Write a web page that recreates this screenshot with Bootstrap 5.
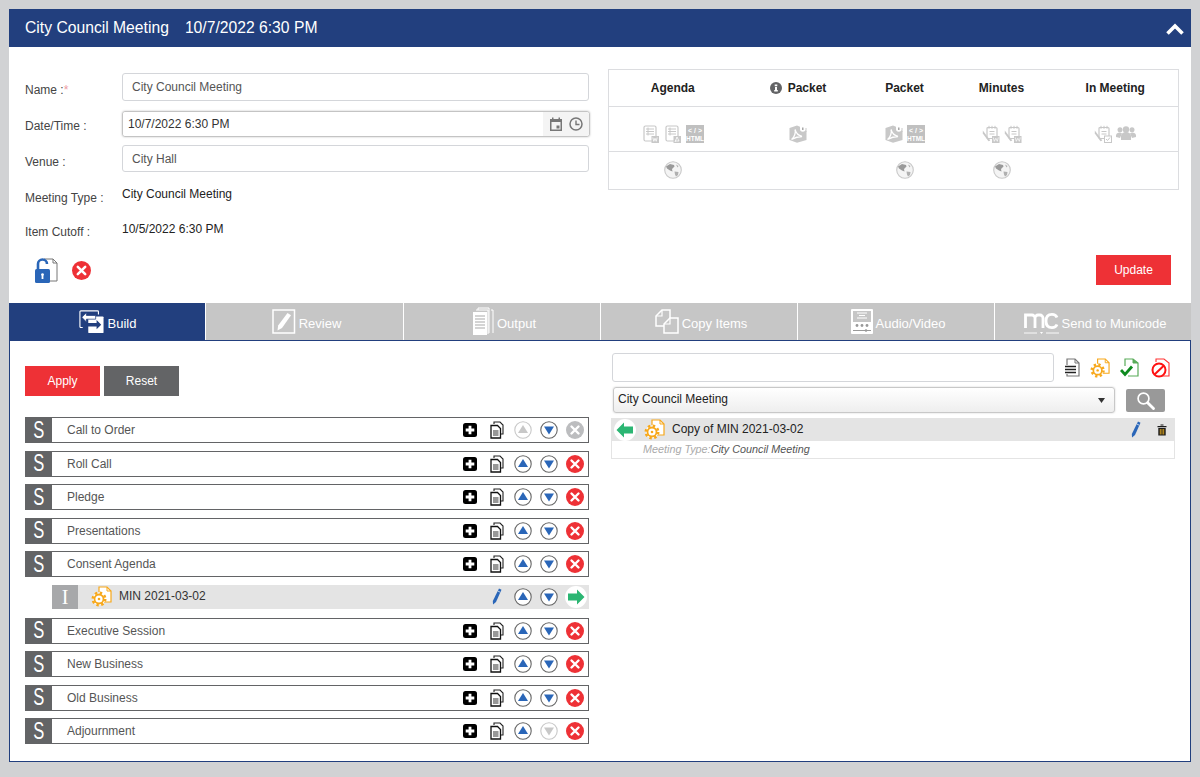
<!DOCTYPE html>
<html lang="en">
<head>
<meta charset="utf-8">
<title>City Council Meeting</title>
<link href="https://cdn.jsdelivr.net/npm/bootstrap@5.3.0/dist/css/bootstrap.min.css" rel="stylesheet">
<style>
html,body{height:100%;}
body{background:#d1d2d4;font-family:"Liberation Sans",Arial,sans-serif;font-size:12px;color:#444;padding:9px 9px 15px;overflow:hidden;}
svg{display:block;flex:none;}
.shell{width:1182px;}
.headbar{height:38px;background:#223f7e;color:#fff;font-size:15.7px;padding:0 16px;}
.headbar .when{margin-left:16px;}
.chev{margin-right:-9px;margin-top:1px;}
.toppane{height:256px;background:#fff;padding:26px 12px 0 16px;gap:19px;}
.leftform{width:564px;}
.fld{margin-bottom:8px;}
.fld-label{width:97px;flex:none;color:#444;}
.ctl.form-control{font-size:12px;color:#555;border:1px solid #d4d6da;border-radius:3px;padding:0 9px;box-shadow:none;}
.h28{height:28px;margin-bottom:10px;}
.h27{height:27px;}
.dategrp{height:26px;border:1px solid #c4c4c4;border-radius:3px;box-shadow:0 0 2px #bbb;flex-wrap:nowrap;width:468px;flex:none;}
.dategrp .form-control{border:0;border-radius:3px 0 0 3px;font-size:12px;color:#333;padding:0 5px;height:24px;min-height:0;}
.dategrp .input-group-text{background:#f4f4f4;border:0;border-left:1px solid #d4d4d4;border-radius:0 3px 3px 0;padding:0 6px;gap:6px;}
.static-val{color:#222;}
.stat-row{height:35px;}
.stat-first{margin-top:-3px;}
.labnudge{padding-top:6px;}
.labnudge-s{padding-top:4px;}
.valnudge{padding-bottom:2px;}
.actions-top{gap:14px;padding-left:9px;margin-top:9px;}
.btn.rbtn{width:75px;height:30px;border-radius:0;border:0;font-size:12px;color:#fff;padding:0;display:flex;align-items:center;justify-content:center;}
.bg-r{background:#ee3136;}
.bg-r:hover{background:#ee3136;}
.bg-d{background:#636466;}
.bg-d:hover{background:#636466;}
.rightside{width:571px;height:230px;}
.outtable{width:570px;height:120px;table-layout:fixed;border:1px solid #dcdde0;margin:-4px 0 0;border-collapse:collapse;}
.outtable td,.outtable th{border:0;border-top:1px solid #dcdde0;padding:0;text-align:center;vertical-align:middle;font-size:12px;color:#222;font-weight:700;}
.outtable tr:first-child th{border-top:0;height:37px;}
.outtable .r2{height:45px;}
.outtable .r2 td{padding-top:9px;}
.outtable .r3{height:38px;}
.outtable .r3 td{padding-bottom:2px;}
.c1{width:128px;}.c2{width:122px;}.c3{width:92px;}.c4{width:102px;}.c5{width:126px;}
.pkt{gap:6px;padding:0 0 0 1px;}
.updrow{margin-top:65px;padding-right:8px;}
.tabbar{height:37px;background:#fff;}
.tabitem{flex:none;width:197px;background:#c6c6c6;color:#fff;font-size:13px;border-right:1px solid #fff;gap:3px;height:37px;padding-left:4px;}
.tabitem:nth-child(2){width:198px;}
.tabitem:last-child{border-right:0;width:196px;}
.tabitem span{margin-top:5px;}
.tabitem.on{background:#223f7e;padding-left:0;}
.workpane{height:422px;background:#fff;border:1px solid #223f7e;padding:25px 15px 0;}
.buildcol{width:564px;flex:none;}
.btnrow{gap:4px;margin-bottom:21px;}
.sect{height:26px;margin-bottom:7.5px;border:1px solid #636466;background:#fff;color:#555;}
.sblock{width:27px;align-self:stretch;background:#636466;color:#fff;font-size:23px;margin:-1px 0 -1px -1px;flex:none;}
.sglyph{display:inline-block;transform:scaleX(.72);line-height:1;}
.sname{padding-left:15px;}
.tc{height:24px;flex:none;}
.w25{width:25px;}.w26{width:26px;}.w27{width:27px;}
.itemrow{height:24px;margin-left:27px;margin-bottom:9px;background:#e4e4e4;color:#333;}
.iblock{width:26px;align-self:stretch;background:#a7a8aa;color:#fff;font-family:"Liberation Serif",serif;font-size:20px;flex:none;}
.itemgear{margin-left:13px;}
.itemname{margin-left:7px;margin-top:-2px;}
.searchcol{width:564px;margin-left:22px;margin-top:-13px;}
.searchin.form-control{height:29px;width:442px;border:1px solid #d4d6da;border-radius:3px;margin-left:1px;padding:0 6px;font-size:12px;}
.srchicons{margin-left:11px;gap:10px;}
.pick{width:502px;height:26px;margin:5px 0 0 2px;font-size:12px;color:#222;padding:0 20px 2px 4px;border:1px solid #c8c8c8;border-radius:3px;box-shadow:0 0 2px #ccc;background:url("data:image/svg+xml,%3Csvg xmlns='http://www.w3.org/2000/svg' width='8' height='5'%3E%3Cpath d='M0 0h7L3.500 5z' fill='%23333'/%3E%3C/svg%3E") no-repeat right 8px center,linear-gradient(#fff,#eee);}
.lensbtn{width:39px;height:23px;background:#999;border:0;border-radius:2px;padding:0;margin:7px 0 0 11px;}
.lensbtn:hover{background:#999;}
.hit{margin-top:5px;width:564px;}
.hithead{height:23px;background:#e4e4e4;color:#222;padding-left:3px;}
.hitname{margin-left:7px;margin-top:-2px;}
.hitmeta{height:18px;border:1px solid #e4e4e4;border-top:0;font-size:10.8px;font-style:italic;color:#555;padding-left:31px;}
.hitmeta span{color:#aaa;}
</style>
</head>
<body>
<svg width="0" height="0" class="position-absolute">
<defs>
<symbol id="plus" viewBox="0 0 14 14"><rect width="14" height="14" rx="2.500" fill="#000"/><path d="M5.600 2.700h2.800v2.900h2.900v2.800H8.400v2.900H5.600V8.400H2.700V5.600h2.900z" fill="#fff"/></symbol>
<symbol id="copydoc" viewBox="0 0 14 18"><path d="M4 3V1h6l3 3v9h-3" fill="#fff" stroke="#222" stroke-width="1.100"/><path d="M1 4.500h6.500l3 3V17H1z" fill="#fff" stroke="#111" stroke-width="1.300"/><path d="M3 10h5.500M3 12h5.500M3 14h5.500" stroke="#333" stroke-width="1.100"/></symbol>
<symbol id="up" viewBox="0 0 18 18"><circle cx="9" cy="9" r="8.200" fill="#fff" stroke="#666" stroke-width="1.100"/><path d="M9 4l5 8H4z" fill="#2a66b8"/></symbol>
<symbol id="down" viewBox="0 0 18 18"><circle cx="9" cy="9" r="8.200" fill="#fff" stroke="#666" stroke-width="1.100"/><path d="M9 13.500l-5-8h10z" fill="#2a66b8"/></symbol>
<symbol id="upoff" viewBox="0 0 18 18"><circle cx="9" cy="9" r="8.200" fill="#fff" stroke="#c8c8c8" stroke-width="1.100"/><path d="M9 4l5 8H4z" fill="#c8c8c8"/></symbol>
<symbol id="downoff" viewBox="0 0 18 18"><circle cx="9" cy="9" r="8.200" fill="#fff" stroke="#c8c8c8" stroke-width="1.100"/><path d="M9 13.500l-5-8h10z" fill="#c8c8c8"/></symbol>
<symbol id="xred" viewBox="0 0 18 18"><circle cx="9" cy="9" r="9" fill="#ee3136"/><path d="M5.500 5.500l7 7M12.500 5.500l-7 7" stroke="#fff" stroke-width="2.400" stroke-linecap="round"/></symbol>
<symbol id="xoff" viewBox="0 0 18 18"><circle cx="9" cy="9" r="9" fill="#bcbdbf"/><path d="M5.500 5.500l7 7M12.500 5.500l-7 7" stroke="#fff" stroke-width="2.400" stroke-linecap="round"/></symbol>
<symbol id="gor" viewBox="0 0 22 22"><circle cx="11" cy="11" r="11" fill="#fff"/><path d="M3 7.500h9V3.500l7.500 7.500-7.500 7.500v-4H3z" fill="#2bb673"/></symbol>
<symbol id="gol" viewBox="0 0 22 22"><circle cx="11" cy="11" r="11" fill="#fff"/><path d="M19 7.500h-9V3.500L2.500 11l7.500 7.500v-4h9z" fill="#2bb673"/></symbol>
<symbol id="pencil" viewBox="0 0 10 17"><path d="M7 .5l2.500 1.200L4 14l-3 2.500L.8 13z" fill="#2a66b8"/><path d="M5.800 3l2.400 1.200" stroke="#fff" stroke-width=".7"/></symbol>
<symbol id="geardoc" viewBox="0 0 21 21"><path d="M8 6V1h8l4 4v11h-7" fill="#fff" stroke="#f7a81b" stroke-width="1.200"/><path d="M16 1v4h4" fill="none" stroke="#f7a81b"/><circle cx="8" cy="13" r="6.200" fill="#fff" stroke="#f7a81b" stroke-width="2.600" stroke-dasharray="2.400 2.470"/><circle cx="8" cy="13" r="4.500" fill="#fff" stroke="#f7a81b" stroke-width="1.800"/><circle cx="8" cy="13" r="1.300" fill="#f7a81b"/></symbol>
<symbol id="trash" viewBox="0 0 10 12"><path d="M3.500 1.500V.5h3v1M.5 2h9v1.300h-9zM1.300 4h7.400v7.500H1.300z" fill="#1c1c1c"/><path d="M3.300 5v5.500M5 5v5.500M6.700 5v5.500" stroke="#d09c1e" stroke-width="1"/></symbol>
<symbol id="linedoc" viewBox="0 0 15 19"><path d="M2 7V1h8l4 4v13H2v-2" fill="#fff" stroke="#777" stroke-width="1.200"/><path d="M10 1v4h4" fill="none" stroke="#777"/><path d="M0 8.500h11M0 11.500h11M0 14.500h11" stroke="#222" stroke-width="1.700"/></symbol>
<symbol id="checkdoc" viewBox="0 0 20 19"><path d="M5 8V1h8l5 4v13H8" fill="#fff" stroke="#59ab59" stroke-width="1.200"/><path d="M13 1v4h5" fill="#59ab59" stroke="#59ab59"/><path d="M1 12l4 4.500 7-8" fill="none" stroke="#0d8a1e" stroke-width="2.800"/></symbol>
<symbol id="nodoc" viewBox="0 0 20 20"><path d="M6 4V1h8l5 4v13h-7" fill="#fff" stroke="#f33" stroke-width="1.100"/><circle cx="9" cy="12" r="6.500" fill="#fff" stroke="#f11" stroke-width="2"/><path d="M4.500 16.500L14 7.500" stroke="#f11" stroke-width="2"/></symbol>
<symbol id="lens" viewBox="0 0 24 24"><circle cx="9" cy="9" r="6.500" fill="none" stroke="#fff" stroke-width="2"/><path d="M14 14l7 7" stroke="#fff" stroke-width="3.400" stroke-linecap="round"/></symbol>
<symbol id="lockdoc" viewBox="0 0 24 28"><path d="M10 3h9l4 4v18h-9" fill="#fff" stroke="#777" stroke-width="1"/><path d="M19 3v4h4" fill="none" stroke="#777"/><path d="M4 13V8a4.500 4.500 0 0 1 9 0" fill="none" stroke="#2a66b8" stroke-width="2.600"/><rect x="1" y="13" width="15" height="14" rx="1.500" fill="#2a66b8"/><path d="M8.500 18v5" stroke="#fff" stroke-width="1.800"/><circle cx="8.500" cy="18.500" r="1.300" fill="#fff"/></symbol>
<symbol id="cal" viewBox="0 0 14 14"><path d="M1 2h2V.5h1.500V2h5V.5H11V2h2v12H1z" fill="#777"/><rect x="2.500" y="5" width="9" height="7.500" fill="#f4f4f4"/><rect x="7.500" y="8.500" width="3" height="3" fill="#777"/></symbol>
<symbol id="clock" viewBox="0 0 14 14"><circle cx="7" cy="7" r="6" fill="none" stroke="#777" stroke-width="1.500"/><path d="M7 3.500V7.500h3.500" fill="none" stroke="#777" stroke-width="1.400"/></symbol>
<symbol id="chevron" viewBox="0 0 18 12"><path d="M1.500 10.500L9 3l7.500 7.500" fill="none" stroke="#fff" stroke-width="3.600"/></symbol>
<symbol id="infod" viewBox="0 0 12 12"><circle cx="6" cy="6" r="6" fill="#636466"/><path d="M4.700 2.500h2.600v1.800H4.700zM5 5h2v3h.8v1.500H4.200V8H5z" fill="#fff"/></symbol>
<symbol id="listdoc" viewBox="0 0 16 18"><rect x="1" y="1" width="12" height="15" rx="1.500" fill="#fff" stroke="#c8c8c8" stroke-width="1.200"/><path d="M3 4h8M3 6.500h8M3 9h8M5 2.500v8" stroke="#c8c8c8"/><rect x="8.500" y="11" width="7.500" height="7" fill="#c8c8c8"/><path d="M9.800 12.500l1 3.800 1.200-3 1.200 3 1-3.800" fill="none" stroke="#fff" stroke-width=".8"/></symbol>
<symbol id="listpdf" viewBox="0 0 16 18"><rect x="1" y="1" width="12" height="15" rx="1.500" fill="#fff" stroke="#c8c8c8" stroke-width="1.200"/><path d="M3 4h8M3 6.500h8M3 9h8M5 2.500v8" stroke="#c8c8c8"/><rect x="8.500" y="11" width="7.500" height="7" fill="#c8c8c8"/><path d="M10 17l2-5 2 4-4 0" fill="none" stroke="#fff" stroke-width=".8"/></symbol>
<symbol id="htmlbox" viewBox="0 0 18 18"><rect width="18" height="18" fill="#c0c0c0"/><text x="9" y="8" font-family="Liberation Sans" font-size="7" fill="#fff" text-anchor="middle">&lt; / &gt;</text><text x="9" y="16" font-family="Liberation Sans" font-size="6.500" font-weight="700" fill="#fff" text-anchor="middle">HTML</text></symbol>
<symbol id="acro" viewBox="0 0 18 18"><path d="M.5 3L8 .5l3 1.200V6h6.500v9L8 17.800.5 15z" fill="#c8c8c8"/><path d="M11 3h6.500v4H11z" fill="#c8c8c8"/><circle cx="13.800" cy="4" r="2.800" fill="#fff"/><path d="M13.800 2.500v2.600" stroke="#999" stroke-width="1.300"/><path d="M2.500 14.500c3-2 4.500-7.500 3.500-10 1 3.500 3.500 6 7 7-3.500 0-7 1-10.500 3z" fill="none" stroke="#fff" stroke-width="1.300"/></symbol>
<symbol id="mindoc" viewBox="0 0 18 18"><rect x="5" y="2.500" width="10" height="11" rx="1" fill="#fff" stroke="#c8c8c8" stroke-width="1.200"/><path d="M7 .8v3M10 .8v3M13 .8v3M7.500 6.500h5M7.500 9h5" stroke="#c8c8c8"/><path d="M.8 5.500l7.500 10-1.800.8L.8 8.500z" fill="#c8c8c8"/><rect x="10" y="11" width="7.500" height="7" fill="#c8c8c8"/><path d="M11.300 12.500l1 3.800 1.500-3 1.500 3 1-3.800" fill="none" stroke="#fff" stroke-width=".7"/></symbol>
<symbol id="mincheck" viewBox="0 0 18 18"><rect x="5" y="2.500" width="10" height="11" rx="1" fill="#fff" stroke="#c8c8c8" stroke-width="1.200"/><path d="M7 .8v3M10 .8v3M13 .8v3M7.500 6.500h5M7.500 9h5" stroke="#c8c8c8"/><path d="M.8 5.500l7.500 10-1.800.8L.8 8.500z" fill="#c8c8c8"/><rect x="10.500" y="11" width="7" height="6.500" fill="#fff" stroke="#c8c8c8"/><path d="M12 14l1.500 1.500 2.500-3" fill="none" stroke="#c8c8c8"/></symbol>
<symbol id="people" viewBox="0 0 20 16"><circle cx="10" cy="4.500" r="3.200" fill="#c8c8c8"/><circle cx="4" cy="4.800" r="2.500" fill="#c8c8c8"/><circle cx="16" cy="4.800" r="2.500" fill="#c8c8c8"/><path d="M5 15V11a5 4 0 0 1 10 0v4z" fill="#c8c8c8"/><path d="M0 12V10a3.500 3 0 0 1 6-1.500L4 13zM20 12V10a3.500 3 0 0 0-6-1.500l2 4.500z" fill="#c8c8c8"/></symbol>
<symbol id="globe" viewBox="0 0 18 18"><circle cx="9" cy="9" r="8.300" fill="#f4f4f4" stroke="#c8c8c8" stroke-width="1.100"/><path d="M2 5.500L6 3l4 1 .5 1.500L8 8 8.500 10.500 6 9.500 3 7.500z" fill="#9a9a9a"/><path d="M10.500 10.500l4 .5-.5 3-2 1.500-1-2zM12 3.500l2.500 1.500-1 1.500z" fill="#b0b0b0"/></symbol>
<symbol id="t-build" viewBox="0 0 27 27"><path d="M4 20H2a1 1 0 0 1-1-1V3a1 1 0 0 1 1-1h18a1 1 0 0 1 1 1v3" fill="none" stroke="#fff" stroke-width="1.200"/><rect x="10" y="8" width="16.500" height="18" rx="1" fill="#fff"/><path d="M3 9l5-5v3h10v4H8v3z" fill="#fff" stroke="#223f7e" stroke-width=".8"/><path d="M24 17l-5 5v-3H9v-4h10v-3z" fill="#223f7e"/></symbol>
<symbol id="t-review" viewBox="0 0 24 25"><rect x="1" y="1" width="21.500" height="23" fill="none" stroke="#fff" stroke-width="1.500"/><path d="M15.500 4l3.500 2.200L10 19l-4.500 2.500.6-5z" fill="#fff"/></symbol>
<symbol id="t-output" viewBox="0 0 22 29"><path d="M6 3V1h11v25M4 3h12v24" fill="none" stroke="#fff"/><path d="M19 3h2v23" fill="none" stroke="#fff"/><rect x="1" y="5" width="14" height="23" fill="#fff"/><path d="M3 9h10M3 12h10M3 15h10M3 18h10M3 21h10" stroke="#c6c6c6" stroke-width="1.300"/></symbol>
<symbol id="t-copy" viewBox="0 0 24 25"><path d="M9 17H1V7l6-6h8v8" fill="none" stroke="#fff" stroke-width="1.500"/><path d="M7 1v6H1" fill="none" stroke="#fff" stroke-width="1.200"/><path d="M9 15l6-6h8v15H9z" fill="#c6c6c6" stroke="#fff" stroke-width="1.500"/><path d="M15 9v6H9" fill="none" stroke="#fff" stroke-width="1.200"/></symbol>
<symbol id="t-av" viewBox="0 0 22 25"><rect width="22" height="25" rx="1" fill="#fff"/><rect x="2" y="2" width="18" height="11" fill="#c6c6c6"/><path d="M6 4h10M8 6.500h6M6 9h10" stroke="#fff"/><circle cx="6" cy="16.500" r="1.400" fill="#999"/><circle cx="11" cy="16.500" r="1.400" fill="#999"/><circle cx="16" cy="16.500" r="1.400" fill="#999"/><path d="M2 21.500h18" stroke="#999"/><circle cx="15" cy="21.500" r="1.300" fill="#999"/></symbol>
<symbol id="t-mc" viewBox="0 0 35 24"><path d="M1.500 18V5h6.500a3 3 0 0 1 3 3v10M11 8a3 3 0 0 1 3-3h2a3 3 0 0 1 3 3v10" fill="none" stroke="#fff" stroke-width="2.800"/><path d="M33 7.500C32 5 30 4.300 28 4.300c-3.500 0-6 2.300-6 6.700s2.500 6.700 6 6.700c2 0 4-.7 5-3.200" fill="none" stroke="#fff" stroke-width="2.800"/><path d="M0 23h13M22 23h13" stroke="#fff" stroke-width=".9"/><path d="M16 22h3l-1.500 2z" fill="#fff"/></symbol>
</defs>
</svg>

<div class="shell">
  <div class="headbar d-flex align-items-center justify-content-between">
    <div><span>City Council Meeting</span><span class="when">10/7/2022 6:30 PM</span></div>
    <svg class="chev" width="18" height="12"><use href="#chevron"/></svg>
  </div>

  <div class="toppane d-flex">
    <div class="leftform">
      <div class="d-flex align-items-center h28"><label class="fld-label labnudge">Name :<span class="text-danger opacity-50">*</span></label><input class="form-control ctl h-100" value="City Council Meeting"></div>
      <div class="d-flex align-items-center fld"><label class="fld-label labnudge-s">Date/Time :</label>
        <div class="input-group dategrp"><input class="form-control" value="10/7/2022 6:30 PM"><span class="input-group-text"><svg width="14" height="14"><use href="#cal"/></svg><svg width="14" height="14"><use href="#clock"/></svg></span></div></div>
      <div class="d-flex align-items-center h27 mb-2"><label class="fld-label labnudge">Venue :</label><input class="form-control ctl h-100" value="City Hall"></div>
      <div class="d-flex align-items-center stat-row stat-first"><label class="fld-label labnudge">Meeting Type :</label><span class="static-val valnudge">City Council Meeting</span></div>
      <div class="d-flex align-items-center stat-row"><label class="fld-label labnudge-s">Item Cutoff :</label><span class="static-val valnudge">10/5/2022 6:30 PM</span></div>
      <div class="d-flex align-items-center actions-top"><svg width="24" height="28"><use href="#lockdoc"/></svg><svg width="19" height="19"><use href="#xred"/></svg></div>
    </div>
    <div class="rightside">
      <table class="table outtable">
        <colgroup><col class="c1"><col class="c2"><col class="c3"><col class="c4"><col class="c5"></colgroup>
        <tr><th>Agenda</th><th><span class="d-flex justify-content-center align-items-center pkt"><svg width="12" height="12"><use href="#infod"/></svg>Packet</span></th><th>Packet</th><th>Minutes</th><th>In Meeting</th></tr>
        <tr class="r2">
          <td><span class="d-flex justify-content-center gap-1"><svg width="18" height="18"><use href="#listdoc"/></svg><svg width="18" height="18"><use href="#listpdf"/></svg><svg width="18" height="18"><use href="#htmlbox"/></svg></span></td>
          <td><span class="d-flex justify-content-center"><svg width="18" height="18"><use href="#acro"/></svg></span></td>
          <td><span class="d-flex justify-content-center gap-1"><svg width="18" height="18"><use href="#acro"/></svg><svg width="18" height="18"><use href="#htmlbox"/></svg></span></td>
          <td><span class="d-flex justify-content-center gap-1"><svg width="18" height="18"><use href="#mindoc"/></svg><svg width="18" height="18"><use href="#mindoc"/></svg></span></td>
          <td><span class="d-flex justify-content-center gap-1"><svg width="18" height="18"><use href="#mincheck"/></svg><svg width="20" height="16"><use href="#people"/></svg></span></td>
        </tr>
        <tr class="r3">
          <td><span class="d-flex justify-content-center"><svg width="18" height="18"><use href="#globe"/></svg></span></td><td></td>
          <td><span class="d-flex justify-content-center"><svg width="18" height="18"><use href="#globe"/></svg></span></td>
          <td><span class="d-flex justify-content-center"><svg width="18" height="18"><use href="#globe"/></svg></span></td><td></td>
        </tr>
      </table>
      <div class="d-flex justify-content-end updrow"><button class="btn rbtn bg-r">Update</button></div>
    </div>
  </div>

  <div class="tabbar d-flex">
    <div class="tabitem on d-flex align-items-center justify-content-center"><svg width="27" height="25"><use href="#t-build"/></svg><span>Build</span></div>
    <div class="tabitem d-flex align-items-center justify-content-center"><svg width="24" height="25"><use href="#t-review"/></svg><span>Review</span></div>
    <div class="tabitem d-flex align-items-center justify-content-center"><svg width="22" height="29"><use href="#t-output"/></svg><span>Output</span></div>
    <div class="tabitem d-flex align-items-center justify-content-center"><svg width="24" height="25"><use href="#t-copy"/></svg><span>Copy Items</span></div>
    <div class="tabitem d-flex align-items-center justify-content-center"><svg width="22" height="25"><use href="#t-av"/></svg><span>Audio/Video</span></div>
    <div class="tabitem d-flex align-items-center justify-content-center"><svg width="35" height="24"><use href="#t-mc"/></svg><span>Send to Municode</span></div>
  </div>

  <div class="workpane d-flex">
    <div class="buildcol">
      <div class="d-flex btnrow"><button class="btn rbtn bg-r">Apply</button><button class="btn rbtn bg-d">Reset</button></div>

      <div class="sect d-flex align-items-center"><div class="sblock d-flex align-items-center justify-content-center"><span class="sglyph">S</span></div><div class="sname flex-grow-1">Call to Order</div><div class="d-flex">
        <div class="tc w26 d-flex align-items-center justify-content-center"><svg width="14" height="14"><use href="#plus"/></svg></div><div class="tc w27 d-flex align-items-center justify-content-center"><svg width="14" height="18"><use href="#copydoc"/></svg></div><div class="tc w25 d-flex align-items-center justify-content-center"><svg width="18" height="18"><use href="#upoff"/></svg></div><div class="tc w27 d-flex align-items-center justify-content-center"><svg width="18" height="18"><use href="#down"/></svg></div><div class="tc w26 d-flex align-items-center justify-content-center"><svg width="18" height="18"><use href="#xoff"/></svg></div></div></div>

      <div class="sect d-flex align-items-center"><div class="sblock d-flex align-items-center justify-content-center"><span class="sglyph">S</span></div><div class="sname flex-grow-1">Roll Call</div><div class="d-flex">
        <div class="tc w26 d-flex align-items-center justify-content-center"><svg width="14" height="14"><use href="#plus"/></svg></div><div class="tc w27 d-flex align-items-center justify-content-center"><svg width="14" height="18"><use href="#copydoc"/></svg></div><div class="tc w25 d-flex align-items-center justify-content-center"><svg width="18" height="18"><use href="#up"/></svg></div><div class="tc w27 d-flex align-items-center justify-content-center"><svg width="18" height="18"><use href="#down"/></svg></div><div class="tc w26 d-flex align-items-center justify-content-center"><svg width="18" height="18"><use href="#xred"/></svg></div></div></div>

      <div class="sect d-flex align-items-center"><div class="sblock d-flex align-items-center justify-content-center"><span class="sglyph">S</span></div><div class="sname flex-grow-1">Pledge</div><div class="d-flex">
        <div class="tc w26 d-flex align-items-center justify-content-center"><svg width="14" height="14"><use href="#plus"/></svg></div><div class="tc w27 d-flex align-items-center justify-content-center"><svg width="14" height="18"><use href="#copydoc"/></svg></div><div class="tc w25 d-flex align-items-center justify-content-center"><svg width="18" height="18"><use href="#up"/></svg></div><div class="tc w27 d-flex align-items-center justify-content-center"><svg width="18" height="18"><use href="#down"/></svg></div><div class="tc w26 d-flex align-items-center justify-content-center"><svg width="18" height="18"><use href="#xred"/></svg></div></div></div>

      <div class="sect d-flex align-items-center"><div class="sblock d-flex align-items-center justify-content-center"><span class="sglyph">S</span></div><div class="sname flex-grow-1">Presentations</div><div class="d-flex">
        <div class="tc w26 d-flex align-items-center justify-content-center"><svg width="14" height="14"><use href="#plus"/></svg></div><div class="tc w27 d-flex align-items-center justify-content-center"><svg width="14" height="18"><use href="#copydoc"/></svg></div><div class="tc w25 d-flex align-items-center justify-content-center"><svg width="18" height="18"><use href="#up"/></svg></div><div class="tc w27 d-flex align-items-center justify-content-center"><svg width="18" height="18"><use href="#down"/></svg></div><div class="tc w26 d-flex align-items-center justify-content-center"><svg width="18" height="18"><use href="#xred"/></svg></div></div></div>

      <div class="sect d-flex align-items-center"><div class="sblock d-flex align-items-center justify-content-center"><span class="sglyph">S</span></div><div class="sname flex-grow-1">Consent Agenda</div><div class="d-flex">
        <div class="tc w26 d-flex align-items-center justify-content-center"><svg width="14" height="14"><use href="#plus"/></svg></div><div class="tc w27 d-flex align-items-center justify-content-center"><svg width="14" height="18"><use href="#copydoc"/></svg></div><div class="tc w25 d-flex align-items-center justify-content-center"><svg width="18" height="18"><use href="#up"/></svg></div><div class="tc w27 d-flex align-items-center justify-content-center"><svg width="18" height="18"><use href="#down"/></svg></div><div class="tc w26 d-flex align-items-center justify-content-center"><svg width="18" height="18"><use href="#xred"/></svg></div></div></div>

      <div class="itemrow d-flex align-items-center"><div class="iblock d-flex align-items-center justify-content-center">I</div><svg class="itemgear" width="21" height="21"><use href="#geardoc"/></svg><div class="itemname flex-grow-1">MIN 2021-03-02</div><div class="d-flex">
        <div class="tc w26 d-flex align-items-center justify-content-center"><svg width="10" height="17"><use href="#pencil"/></svg></div><div class="tc w25 d-flex align-items-center justify-content-center"><svg width="18" height="18"><use href="#up"/></svg></div><div class="tc w27 d-flex align-items-center justify-content-center"><svg width="18" height="18"><use href="#down"/></svg></div><div class="tc w27 d-flex align-items-center justify-content-center"><svg width="22" height="22"><use href="#gor"/></svg></div></div></div>

      <div class="sect d-flex align-items-center"><div class="sblock d-flex align-items-center justify-content-center"><span class="sglyph">S</span></div><div class="sname flex-grow-1">Executive Session</div><div class="d-flex">
        <div class="tc w26 d-flex align-items-center justify-content-center"><svg width="14" height="14"><use href="#plus"/></svg></div><div class="tc w27 d-flex align-items-center justify-content-center"><svg width="14" height="18"><use href="#copydoc"/></svg></div><div class="tc w25 d-flex align-items-center justify-content-center"><svg width="18" height="18"><use href="#up"/></svg></div><div class="tc w27 d-flex align-items-center justify-content-center"><svg width="18" height="18"><use href="#down"/></svg></div><div class="tc w26 d-flex align-items-center justify-content-center"><svg width="18" height="18"><use href="#xred"/></svg></div></div></div>

      <div class="sect d-flex align-items-center"><div class="sblock d-flex align-items-center justify-content-center"><span class="sglyph">S</span></div><div class="sname flex-grow-1">New Business</div><div class="d-flex">
        <div class="tc w26 d-flex align-items-center justify-content-center"><svg width="14" height="14"><use href="#plus"/></svg></div><div class="tc w27 d-flex align-items-center justify-content-center"><svg width="14" height="18"><use href="#copydoc"/></svg></div><div class="tc w25 d-flex align-items-center justify-content-center"><svg width="18" height="18"><use href="#up"/></svg></div><div class="tc w27 d-flex align-items-center justify-content-center"><svg width="18" height="18"><use href="#down"/></svg></div><div class="tc w26 d-flex align-items-center justify-content-center"><svg width="18" height="18"><use href="#xred"/></svg></div></div></div>

      <div class="sect d-flex align-items-center"><div class="sblock d-flex align-items-center justify-content-center"><span class="sglyph">S</span></div><div class="sname flex-grow-1">Old Business</div><div class="d-flex">
        <div class="tc w26 d-flex align-items-center justify-content-center"><svg width="14" height="14"><use href="#plus"/></svg></div><div class="tc w27 d-flex align-items-center justify-content-center"><svg width="14" height="18"><use href="#copydoc"/></svg></div><div class="tc w25 d-flex align-items-center justify-content-center"><svg width="18" height="18"><use href="#up"/></svg></div><div class="tc w27 d-flex align-items-center justify-content-center"><svg width="18" height="18"><use href="#down"/></svg></div><div class="tc w26 d-flex align-items-center justify-content-center"><svg width="18" height="18"><use href="#xred"/></svg></div></div></div>

      <div class="sect d-flex align-items-center"><div class="sblock d-flex align-items-center justify-content-center"><span class="sglyph">S</span></div><div class="sname flex-grow-1">Adjournment</div><div class="d-flex">
        <div class="tc w26 d-flex align-items-center justify-content-center"><svg width="14" height="14"><use href="#plus"/></svg></div><div class="tc w27 d-flex align-items-center justify-content-center"><svg width="14" height="18"><use href="#copydoc"/></svg></div><div class="tc w25 d-flex align-items-center justify-content-center"><svg width="18" height="18"><use href="#up"/></svg></div><div class="tc w27 d-flex align-items-center justify-content-center"><svg width="18" height="18"><use href="#downoff"/></svg></div><div class="tc w26 d-flex align-items-center justify-content-center"><svg width="18" height="18"><use href="#xred"/></svg></div></div></div>
    </div>

    <div class="searchcol">
      <div class="d-flex align-items-center"><input class="form-control searchin"><div class="srchicons d-flex align-items-center"><svg width="15" height="19"><use href="#linedoc"/></svg><svg width="20" height="20"><use href="#geardoc"/></svg><svg width="20" height="19"><use href="#checkdoc"/></svg><svg width="20" height="20"><use href="#nodoc"/></svg></div></div>
      <div class="d-flex align-items-start"><select class="form-select pick"><option>City Council Meeting</option></select><button class="btn lensbtn d-flex align-items-center justify-content-center"><svg width="22" height="20"><use href="#lens"/></svg></button></div>
      <div class="hit">
        <div class="hithead d-flex align-items-center"><svg width="22" height="22"><use href="#gol"/></svg><svg class="ms-2" width="21" height="21"><use href="#geardoc"/></svg><div class="hitname flex-grow-1">Copy of MIN 2021-03-02</div><svg class="me-3" width="10" height="17"><use href="#pencil"/></svg><svg class="me-2" width="10" height="12"><use href="#trash"/></svg></div>
        <div class="hitmeta d-flex align-items-center"><span>Meeting Type:</span>City Council Meeting</div>
      </div>
    </div>
  </div>
</div>
<script src="https://cdn.jsdelivr.net/npm/bootstrap@5.3.0/dist/js/bootstrap.bundle.min.js"></script>
</body>
</html>
